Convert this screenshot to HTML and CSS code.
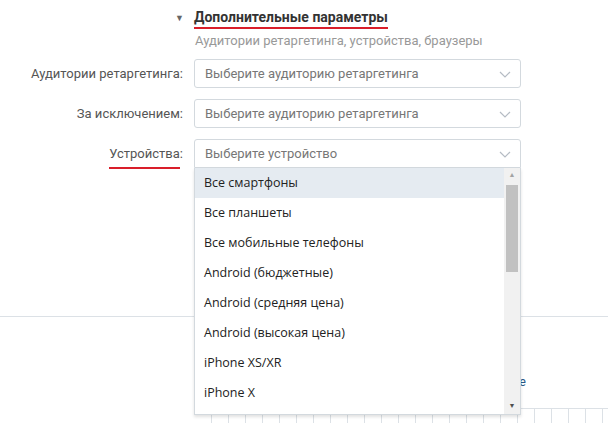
FILE: index.html
```html
<!DOCTYPE html>
<html lang="ru">
<head>
  <meta charset="UTF-8" />
  <meta name="viewport" content="width=device-width, initial-scale=1.0"/>
  <title>Дополнительные параметры</title>
  <link rel="stylesheet" href="styles.css">
</head>
<body>

  <div class="section-head">
    <span class="toggle">&#9660;</span>
    <div>
      <h2 class="section-title">Дополнительные параметры</h2>
      <p class="section-sub">Аудитории ретаргетинга, устройства, браузеры</p>
    </div>
  </div>

  <div class="form">
    <div class="row">
      <label class="row-label">Аудитории ретаргетинга:</label>
      <div class="select">
        <span class="placeholder">Выберите аудиторию ретаргетинга</span>
        <svg class="chevron" width="12" height="7" viewBox="0 0 12 7"><path d="M1 1l5 5 5-5" fill="none" stroke="#b5bcc4" stroke-width="1.2"/></svg>
      </div>
    </div>

    <div class="row">
      <label class="row-label">За исключением:</label>
      <div class="select">
        <span class="placeholder">Выберите аудиторию ретаргетинга</span>
        <svg class="chevron" width="12" height="7" viewBox="0 0 12 7"><path d="M1 1l5 5 5-5" fill="none" stroke="#b5bcc4" stroke-width="1.2"/></svg>
      </div>
    </div>

    <div class="row">
      <label class="row-label"><span class="marked">Устройства</span>:</label>
      <div class="select open">
        <span class="placeholder">Выберите устройство</span>
        <svg class="chevron" width="12" height="7" viewBox="0 0 12 7"><path d="M1 1l5 5 5-5" fill="none" stroke="#b5bcc4" stroke-width="1.2"/></svg>

        <div class="dropdown">
          <ul class="options">
            <li class="active">Все смартфоны</li>
            <li>Все планшеты</li>
            <li>Все мобильные телефоны</li>
            <li>Android (бюджетные)</li>
            <li>Android (средняя цена)</li>
            <li>Android (высокая цена)</li>
            <li>iPhone XS/XR</li>
            <li>iPhone X</li>
          </ul>
          <div class="scrollbar">
            <span class="arrow">&#9650;</span>
            <div class="track"><div class="thumb"></div></div>
            <span class="arrow">&#9660;</span>
          </div>
        </div>
      </div>
    </div>
  </div>

  <hr class="divider">

  <p class="more"><a href="#">Подробнее</a></p>

  <div class="hours">
    <span></span><span></span><span></span><span></span><span></span><span></span>
    <span></span><span></span><span></span><span></span><span></span><span></span>
    <span></span><span></span><span></span><span></span><span></span><span></span>
    <span></span><span></span><span></span><span></span><span></span><span></span>
  </div>

</body>
</html>
```

FILE: styles.css
```css
body {
  margin: 0;
  padding: 0;
  background: #fff;
  font-family: Roboto, 'Liberation Sans', sans-serif;
  font-size: 13px;
  color: #555;
}

.section-head {
  display: flex;
  align-items: flex-start;
  padding-top: 8px;
  margin-left: 175px;
}

.toggle {
  font-size: 9px;
  color: #666;
  width: 19px;
  margin-top: 5px;
}

.section-title {
  display: inline-block;
  margin: 0;
  font-size: 14px;
  font-weight: bold;
  color: #333;
  line-height: 18px;
  padding-bottom: 1px;
  border-bottom: 2px solid #d91e2a;
}

.section-sub {
  margin: 4px 0 0 1px;
  font-size: 13px;
  color: #999;
}

.form {
  margin-top: 11px;
}

.row {
  display: grid;
  grid-template-columns: 183px 327px;
  column-gap: 11px;
  align-items: center;
  margin-bottom: 11px;
}

.row:last-child {
  margin-bottom: 0;
}

.row-label {
  text-align: right;
  color: #555;
}

.marked {
  border-bottom: 2px solid #d91e2a;
  padding-bottom: 6px;
}

.select {
  position: relative;
  display: flex;
  align-items: center;
  justify-content: space-between;
  height: 27px;
  padding: 0 9px 0 10px;
  border: 1px solid #d3d9de;
  border-radius: 3px;
}

.select.open {
  border-radius: 3px 3px 0 0;
}

.placeholder {
  color: #777;
}

.chevron {
  margin-top: 1px;
}

.dropdown {
  position: absolute;
  top: 28px;
  left: -1px;
  right: -1px;
  height: 246px;
  display: flex;
  background: #fff;
  border: 1px solid #d3d9de;
  border-top: none;
  box-shadow: 0 2px 3px rgba(0, 0, 0, 0.12);
  overflow: hidden;
  z-index: 2;
}

.options {
  flex: 1;
  list-style: none;
  margin: 0;
  padding: 0;
  font-family: 'Open Sans', sans-serif;
  font-size: 12.5px;
  color: #222;
}

.options li {
  height: 30px;
  line-height: 30px;
  padding-left: 9px;
}

.options li.active {
  background: #e5ebf1;
}

.scrollbar {
  width: 16px;
  display: flex;
  flex-direction: column;
  background: #f1f1f1;
}

.arrow {
  height: 15px;
  font-size: 7px;
  line-height: 15px;
  text-align: center;
  color: #a3a3a3;
}

.arrow:last-child {
  color: #505050;
}

.track {
  flex: 1;
  padding: 2px 2px 0;
}

.thumb {
  height: 87px;
  background: #c1c1c1;
}

.divider {
  margin: 148px 0 0;
  border: none;
  border-top: 1px solid #dce1e6;
}

.more {
  margin: 57px 0 0;
  width: 526px;
  text-align: right;
  font-size: 12.5px;
}

.more a {
  color: #2a5885;
  text-decoration: none;
}

.hours {
  display: grid;
  grid-template-columns: repeat(24, 17px);
  margin: 19px 0 0 195px;
  border-top: 1px solid #dce1e6;
}

.hours span {
  height: 14px;
  border-right: 1px solid #dce1e6;
}
```
